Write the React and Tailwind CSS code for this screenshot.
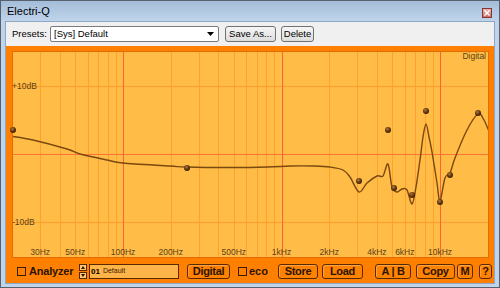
const fx = (f) => 123 + 158.5 * Math.log10(f / 100)
const fy = (db) => 154 - 6.8 * db

const minorFreqs = [30, 40, 50, 60, 70, 80, 90, 200, 300, 400, 500, 600, 700, 800, 900, 2000, 3000, 4000, 5000, 6000, 7000, 8000, 9000]
const majorFreqs = [100, 1000, 10000]
const freqLabels = [
  [30, '30Hz'], [50, '50Hz'], [100, '100Hz'], [200, '200Hz'], [500, '500Hz'],
  [1000, '1kHz'], [2000, '2kHz'], [4000, '4kHz'], [6000, '6kHz'], [10000, '10kHz'],
]

const curve = [
  [10, 136], [33, 140], [67, 149], [80, 154], [107, 160], [123, 163], [170, 166], [187, 167],
  [230, 167.5], [267, 167], [290, 166], [313, 166], [330, 167], [343, 170], [350, 177],
  [359, 192], [367, 183], [377, 176], [383, 176], [388, 164], [392, 187], [397, 192],
  [402, 189], [407, 190], [412, 204], [416, 187], [420, 160], [423, 137], [426, 124],
  [429, 137], [432, 152], [437, 183], [440, 201], [445, 178], [450, 173], [455, 158],
  [467, 130], [478, 114], [484, 120], [490, 134],
]

const nodes = [
  [13, 130], [187, 168], [359, 181], [388, 130], [394, 188],
  [412, 195], [426, 111], [440, 202], [450, 175], [478, 113],
]

function smoothPath(pts) {
  let d = `M${pts[0][0]},${pts[0][1]}`
  for (let i = 0; i < pts.length - 1; i++) {
    const p0 = pts[i - 1] || pts[i]
    const p1 = pts[i]
    const p2 = pts[i + 1]
    const p3 = pts[i + 2] || p2
    const c1x = p1[0] + (p2[0] - p0[0]) / 6
    const c1y = p1[1] + (p2[1] - p0[1]) / 6
    const c2x = p2[0] - (p3[0] - p1[0]) / 6
    const c2y = p2[1] - (p3[1] - p1[1]) / 6
    d += ` C${c1x.toFixed(1)},${c1y.toFixed(1)} ${c2x.toFixed(1)},${c2y.toFixed(1)} ${p2[0]},${p2[1]}`
  }
  return d
}

function EqGraph() {
  return (
    <div className="w-[477px] h-[207px] border border-[#e56c00] bg-[#ffbc46]">
      <svg width="475" height="205" viewBox="13 52 475 205" className="block overflow-visible">
        <defs>
          <radialGradient id="dot" cx="0.4" cy="0.35" r="0.7">
            <stop offset="0" stopColor="#b07a40" />
            <stop offset="0.6" stopColor="#5c3208" />
            <stop offset="1" stopColor="#3a1e02" />
          </radialGradient>
          <clipPath id="plot">
            <rect x="13" y="52" width="475" height="205" />
          </clipPath>
        </defs>
        {minorFreqs.map((f) => (
          <rect key={f} x={Math.round(fx(f))} y="52" width="1" height="205" fill="#ffa12e" />
        ))}
        <rect x="13" y={Math.round(fy(10))} width="475" height="1" fill="#ff9d2c" />
        <rect x="13" y={Math.round(fy(-10))} width="475" height="1" fill="#ff9d2c" />
        <rect x="13" y={Math.round(fy(0))} width="475" height="1" fill="#ff7434" />
        {majorFreqs.map((f) => (
          <rect key={f} x={Math.round(fx(f))} y="52" width="1" height="205" fill="#ff6236" />
        ))}

        <g fontFamily="'Liberation Sans', Arial, sans-serif" fontSize="8.5" fill="#5e4018">
          <text x="12" y={fy(10) + 3}>+10dB</text>
          <text x="12" y={fy(-10) + 3}>-10dB</text>
          <text x="486" y="59" textAnchor="end">Digital</text>
          {freqLabels.map(([f, t]) => (
            <text key={t} x={fx(f)} y="255" textAnchor="middle">{t}</text>
          ))}
        </g>

        <path d={smoothPath(curve)} fill="none" stroke="#7a4810" strokeWidth="1.4" clipPath="url(#plot)" />
        {nodes.map(([x, y], i) => (
          <circle key={i} cx={x} cy={y} r="3" fill="url(#dot)" />
        ))}
      </svg>
    </div>
  )
}

function OrangeButton({ className, children }) {
  return (
    <div className={`h-[15px] flex items-center justify-center rounded-[3px] border border-[#5a2800] bg-[#ff8200] shadow-[inset_1px_1px_0_#ffa040] text-[11px] font-bold tracking-[-0.3px] text-[#2a1400] ${className}`}>
      {children}
    </div>
  )
}

function Checkbox({ className }) {
  return <div className={`w-[9px] h-[9px] border border-[#3a1c00] ${className}`} />
}

export default function App() {
  return (
    <div className="w-[500px] h-[288px] border border-[#56616d] bg-[#bfd4eb] flex flex-col font-['Liberation_Sans',Arial,sans-serif] overflow-hidden">
      {/* title bar */}
      <div className="h-[20px] flex items-center justify-between pl-[6px] pr-[7px] bg-gradient-to-b from-[#a4bdd8] to-[#bfd4eb]">
        <span className="text-[11px] text-black">Electri-Q</span>
        <div className="self-start mt-[7px] w-[10px] h-[10px] border border-[#8a3434] bg-gradient-to-b from-[#e8b4ae] to-[#c7706a] flex items-center justify-center">
          <svg width="6" height="6" viewBox="0 0 6 6">
            <path d="M0.5 0.5 L5.5 5.5 M5.5 0.5 L0.5 5.5" stroke="#ffffff" strokeWidth="1.4" />
          </svg>
        </div>
      </div>

      {/* client area */}
      <div className="flex-1 mx-[4px] mb-[3px] border border-[#8ea7c2] flex flex-col">
        <div className="h-[24px] bg-[#f0f0f0] flex items-center pl-[6px] text-[9.5px] text-black">
          <span className="w-[38px]">Presets:</span>
          <div className="w-[169px] h-[16px] border border-[#7a7a7a] rounded-[2px] bg-white flex items-center justify-between pl-[3px] pr-[4px]">
            <span>[Sys] Default</span>
            <svg width="7" height="4" viewBox="0 0 7 4">
              <path d="M0 0 L7 0 L3.5 4 Z" fill="#000" />
            </svg>
          </div>
          <div className="ml-[6px] w-[51px] h-[16px] border border-[#707070] rounded-[3px] bg-gradient-to-b from-[#f6f6f6] to-[#dddddd] flex items-center justify-center">
            Save As...
          </div>
          <div className="ml-[5px] w-[33px] h-[16px] border border-[#707070] rounded-[3px] bg-gradient-to-b from-[#f6f6f6] to-[#dddddd] flex items-center justify-center">
            Delete
          </div>
        </div>

        <div className="flex-1 bg-[#ff8000] flex flex-col pl-[6px] pt-[5px]">
          <EqGraph />

          <div className="mt-[6px] h-[15px] flex items-center text-[#2a1400]">
            <Checkbox className="ml-[5px]" />
            <span className="ml-[3px] w-[44px] text-[11px] font-bold tracking-[-0.2px]">Analyzer</span>
            <div className="ml-[6px] w-[8px] h-[15px] flex flex-col">
              <div className="h-[7px] border border-[#5a2800] bg-[#ffc878] flex items-center justify-center">
                <svg width="4" height="3" viewBox="0 0 4 3"><path d="M0 3 L2 0 L4 3 Z" fill="#2a1400" /></svg>
              </div>
              <div className="mt-[1px] h-[7px] border border-[#5a2800] bg-[#ffc878] flex items-center justify-center">
                <svg width="4" height="3" viewBox="0 0 4 3"><path d="M0 0 L4 0 L2 3 Z" fill="#2a1400" /></svg>
              </div>
            </div>
            <div className="ml-[2px] w-[90px] h-[15px] border border-[#5a2800] bg-[#ffb44a] flex items-center pl-[1px] gap-[3px]">
              <span className="text-[8px] font-bold text-black">01</span>
              <span className="text-[7px] text-[#3a2000]">Default</span>
            </div>
            <OrangeButton className="ml-[8px] w-[43px]">Digital</OrangeButton>
            <Checkbox className="ml-[8px]" />
            <span className="ml-[2px] w-[16px] text-[11px] font-bold">eco</span>
            <OrangeButton className="ml-[13px] w-[40px]">Store</OrangeButton>
            <OrangeButton className="ml-[4px] w-[41px]">Load</OrangeButton>
            <OrangeButton className="ml-[12px] w-[36px]">A | B</OrangeButton>
            <OrangeButton className="ml-[5px] w-[39px]">Copy</OrangeButton>
            <OrangeButton className="ml-[2px] w-[16px]">M</OrangeButton>
            <OrangeButton className="ml-[6px] w-[13px]">?</OrangeButton>
          </div>
        </div>
      </div>
    </div>
  )
}
